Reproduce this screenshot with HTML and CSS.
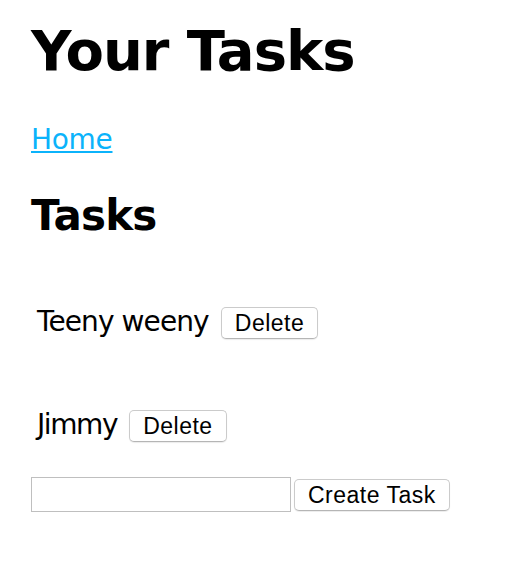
FILE: index.html
```html
<!DOCTYPE html>
<html>
<head>
<meta charset="utf-8">
<title>Your Tasks</title>
<link rel="stylesheet" href="styles.css">
</head>
<body>
<div class="page">
  <h1 class="title">Your Tasks</h1>
  <p class="nav"><a class="nav-link" href="#">Home</a></p>
  <h2 class="section-title">Tasks</h2>
  <div class="task task-first">
    <span class="task-name">Teeny weeny</span>
    <button class="btn" type="button">Delete</button>
  </div>
  <div class="task task-second">
    <span class="task-name task-name-short">Jimmy</span>
    <button class="btn" type="button">Delete</button>
  </div>
  <form class="new-task">
    <input class="new-task-input" type="text">
    <button class="btn btn-create" type="button">Create Task</button>
  </form>
</div>
</body>
</html>
```
FILE: styles.css
```css
html, body {
  margin: 0;
  padding: 0;
  background: #ffffff;
}

.page {
  padding-left: 31px;
  font-family: "DejaVu Sans", "Open Sans", sans-serif;
  color: #000000;
}

.title {
  margin: 19px 0 0;
  font-size: 56px;
  line-height: 64px;
  font-weight: bold;
  letter-spacing: -1px;
}

.nav {
  margin: 41px 0 0;
  font-size: 28px;
  line-height: 32px;
  letter-spacing: -0.3px;
}

.nav-link {
  color: #0bb3fb;
  text-decoration: underline;
  text-decoration-thickness: 2px;
  text-underline-offset: 2px;
}

.section-title {
  margin: 36px 0 0;
  font-size: 42px;
  line-height: 48px;
  font-weight: bold;
  letter-spacing: -0.8px;
}

.task {
  display: flex;
  align-items: baseline;
  gap: 12px;
  padding-left: 6px;
  font-size: 28px;
  line-height: 32px;
}

.task-first {
  margin-top: 66px;
}

.task-second {
  margin-top: 70px;
}

.task-name {
  letter-spacing: -0.9px;
}

.task-name-short {
  letter-spacing: -1.4px;
}

.btn {
  box-sizing: border-box;
  height: 32px;
  padding: 0 13px;
  font-family: "Liberation Sans", Arial, sans-serif;
  font-size: 23px;
  line-height: 30px;
  letter-spacing: 0.5px;
  color: #000000;
  background: #ffffff;
  border: 1px solid #cbcbcb;
  border-bottom-color: #b5b5b5;
  border-radius: 5px;
  box-shadow: 0 1px 1px rgba(0, 0, 0, 0.08);
}

.new-task {
  display: flex;
  align-items: center;
  gap: 3px;
  margin: 35px 0 0;
}

.new-task-input {
  box-sizing: border-box;
  width: 260px;
  height: 35px;
  margin: 0;
  padding: 0 4px;
  border: 1px solid #bfbfbf;
  border-radius: 0;
  background: #ffffff;
  font-size: 20px;
}

.btn-create {
  margin-top: 1px;
}
```
